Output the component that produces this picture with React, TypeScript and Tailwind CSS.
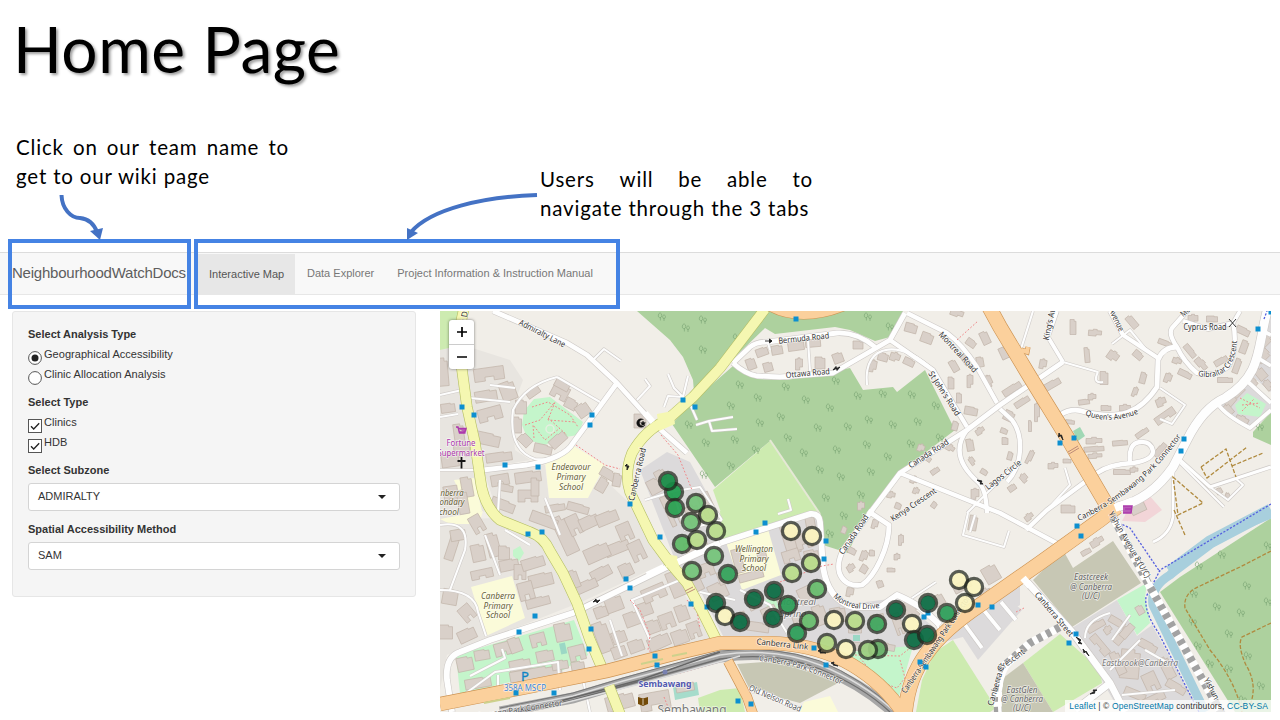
import React from "react";

type Building = [number, number, number, number, number];
type Label = { t: string; x: number; y: number; r?: number; s?: number; c?: string; i?: boolean; b?: boolean; w?: number };

const forests = [
  "637,311 670,340 683,357 693,380 694,392 720,368 763,311",
  "768,311 903,311 890,337 875,341 850,330 835,327 775,334 765,328 735,357",
  "672,424 693,401 733,366 757,379 787,380 850,368 863,390 893,387 897,392 925,370 955,430 900,472 867,512 848,553 823,545 820,515 770,441 715,487",
  "1271,518 1180,577 1160,592 1235,712 1271,712",
  "1253,432 1271,412 1271,445 1253,437",
];
const grass = [
  "440,311 459,311 455,330 453,347 440,350",
  "713,490 770,441 818,512 731,541",
  "1023,663 1060,634 1100,670 1102,683 1053,712",
  "916,712 922,680 935,652 953,640 996,708 990,712",
  "722,540 810,511 720,511",
  "698,698 720,690 720,712 700,712",
  "720,690 740,688 745,712 720,712",
];
const parks = [
  "524,411 534,399 550,397 583,422 578,435 560,438 545,445 528,440 522,425",
  "1117,600 1147,583 1145,597 1150,623 1137,635",
  "456,655 520,636 574,620 588,655 560,672 510,682 460,694",
  "843,658 860,650 913,646 899,696 880,684",
  "765,600 780,596 783,608 768,610",
  "1235,405 1247,393 1266,404 1260,417 1238,414",
  "513,550 520,546 524,553 519,561 513,556",
];
const schools = [
  "545,460 572,445 605,465 588,498 549,498",
  "471,587 512,576 525,618 486,636",
  "440,519 483,511 479,524 450,524",
  "726,542 768,529 781,575 742,590",
  "804,702 830,696 838,712 800,712",
  "454,480 474,478 482,511 470,516",
];
const brown = [
  "1033,580 1063,550 1073,568 1113,541 1141,583 1072,627",
  "1003,678 1023,663 1053,712 1000,712",
  "737,664 780,661 840,682 800,703 750,690",
];
const gray = [
  "640,470 667,452 690,462 722,520 728,543 765,530 806,514 818,520 822,580 850,604 897,598 940,632 970,606 1000,588 1020,583 1020,605 970,635 915,650 860,652 820,642 725,640 700,590 675,560",
  "1072,628 1117,600 1137,636 1152,625 1200,712 1120,712",
  "955,625 1000,592 1022,610 978,660",
  "1217,404 1245,380 1271,402 1271,410 1248,428",
  "1238,383 1258,356 1262,311 1271,311 1271,392 1252,376",
];
const estates = [
  "440,350 458,343 467,410 480,477 487,511 440,520",
  "484,472 545,465 549,498 605,480 640,513 665,563 575,605 548,547 530,532 500,520",
  "440,520 495,518 546,547 576,604 447,655 440,690",
  "583,612 668,570 715,640 610,666 602,665",
  "463,345 510,360 523,380 512,410 515,450 530,460 483,468 475,440",
];

const minorRoads = [
  "M557,377 Q525,385 513,410 Q508,450 535,459 Q560,462 573,443",
  "M557,377 L600,402", "M593,360 L604,349 L621,361", "M637,400 L650,386 L645,379",
  "M664,407 L668,396 L683,397 L674,388 L668,374 M683,397 L688,376 M690,404 L697,420 M696,425 L709,421 L733,417 M709,421 L712,431 L737,429",
  "M440,395 L462,390 M440,470 L482,470 M440,525 Q470,520 465,550 L450,590 M440,590 Q475,590 478,612 L486,636",
  "M645,500 L675,491 L700,487 L722,520 M675,498 L685,530 L722,520", "M770,350 L768,343 M808,340 L810,371",
  "M867,385 C862,340 905,340 935,372", "M1063,362 L1098,372 M1098,372 q-6,12 5,10",
  "M1033,311 L1020,352", "M1112,344 L1130,330 L1148,352 M1160,388 L1185,405 L1172,424 L1160,419",
  "M1210,487 L1228,500 L1243,485 L1235,478 M1180,463 L1224,507",
  "M462,696 L495,672 L558,662 L560,690 M470,676 L505,658 L502,649 M498,695 L498,675 M590,712 L583,680",
  "M778,514 L791,510 L788,499",
  "M1085,638 Q1085,620 1110,613 M1112,640 L1130,615 M1110,670 L1140,640 M1122,695 L1175,690 M1145,650 L1168,663",
  "M1047,510 L1070,485 L1065,468 M967,513 L1010,470", "M968,513 L963,535 L1004,547 L1009,531 M975,515 L970,532",
  "M740,590 L770,605 L790,638 M700,592 L735,600", "M930,612 L945,640 M912,598 L936,582",
  "M440,417 L458,414 M490,385 L515,388 M470,398 L510,402 M500,480 L498,512 M545,498 L560,535",
  "M505,530 L530,545 M485,535 L500,575 M650,640 L632,600 L680,580 M610,620 L622,656 M1152,490 L1163,482",
];
const roads: [string, number][] = [
  ["M493,311 L567,343 L587,355 L617,383 L653,423 L687,453", 5],
  ["M617,383 L590,420 L573,443 Q565,458 527,465 L483,470", 5],
  ["M452,712 L447,680 Q445,657 460,652 L490,640 L573,613 L667,567", 6],
  ["M733,363 L750,347 Q756,342 767,342 L837,333 Q857,332 875,347", 5],
  ["M733,363 Q745,374 757,376 L780,377 L833,373 L890,340 L905,313", 5],
  ["M890,340 L933,370 L967,427", 4.5],
  ["M907,313 L947,333 Q962,344 977,367 L997,403", 4.5],
  ["M1063,362 L1000,405 L967,430 L900,473 L867,517 L843,550 C831,575 846,588 862,585 C875,576 889,548 889,525 L868,511", 5],
  ["M900,473 L1000,513 L1060,545", 4.5],
  ["M967,430 C952,450 962,468 978,482 Q986,488 987,513", 4.5],
  ["M1000,409 L1012,420 C1024,436 1023,465 1007,482", 4.5],
  ["M1060,415 Q1072,407 1085,412 C1120,420 1140,413 1157,387 L1158,360 Q1163,347 1177,347", 5],
  ["M1158,358 L1123,335 L1110,311", 4.5],
  ["M1057,311 L1048,337 L1063,362", 4],
  ["M1187,311 L1172,328 Q1168,334 1177,347 Q1184,362 1197,373 Q1215,378 1229,366 Q1238,345 1233,323 L1208,329 L1183,321", 4.5],
  ["M1233,323 L1240,311", 4],
  ["M1026,530 L1047,510 L1097,473 Q1110,464 1133,463 Q1153,460 1153,451 Q1151,441 1140,442 Q1128,443 1130,463", 4.5],
  ["M1180,460 L1210,487 L1271,467", 3.5],
  ["M1173,470 L1173,517 Q1170,535 1153,542", 3],
  ["M1218,404 Q1225,415 1250,428 L1271,410 M1247,381 L1271,403 M1258,358 L1271,366 M1261,330 L1271,335", 4],
  ["M1117,507 Q1150,500 1173,467 L1187,440 Q1203,408 1225,398 C1262,375 1257,350 1267,311", 9],
  ["M720,543 L810,514 Q819,513 820,522 L823,567 Q828,600 853,607 L880,607 L897,595 Q905,598 920,607 L940,625", 6],
  ["M667,567 L720,543", 7],
  ["M740,689 Q760,690 775,698 L800,710", 4.5],
  ["M1027,582 L1073,633 L1110,683 L1125,712 M1110,683 L1075,710", 7],
  ["M963,622 L982,648 M982,608 L1000,630 M1001,602 L1016,620", 4],
];

const buildings: Building[] = [
  [489,374,30,13,-8],[508,391,15,19,-20],[486,396,22,11,-10],[490,414,24,13,-15],[487,439,26,12,12],[459,434,10,20,-8],[462,451,16,12,-6],[448,408,14,9,-8],[443,372,10,28,-5],
  [533,392,14,8,-35],[521,407,11,14,0],[517,425,9,16,0],[525,440,10,13,-45],[543,449,18,9,12],[558,440,18,10,-42],[560,392,17,14,28],[571,404,12,10,28],[583,410,13,13,-35],[562,385,15,8,28],
  [640,421,12,14,0],[499,457,26,9,-8],[500,480,18,11,-10],[528,477,26,11,-8],[450,460,17,14,-8],[451,495,14,18,-8],[467,487,11,20,-10],
  [506,488,14,7,10],[528,496,20,12,0],[535,487,8,18,0],[503,505,24,10,20],[555,508,20,7,-10],[578,508,22,8,15],[608,474,16,9,30],[602,485,10,14,30],[617,480,8,13,10],
  [463,502,10,24,-10],[477,524,12,18,-30],[493,545,12,24,-15],[478,553,13,17,-12],[482,574,22,9,-12],[504,553,11,14,0],[509,565,19,11,-12],[520,572,12,15,0],[533,563,23,11,-17],[541,580,24,13,-14],[526,591,15,18,-15],[538,602,24,9,-15],[452,548,9,25,18],[458,535,15,11,-10],
  [565,535,14,40,-25],[544,520,28,11,20],[574,525,13,20,-25],[589,522,19,12,-25],[607,518,22,12,-22],[625,532,14,18,-23],[617,548,25,11,-22],[597,553,25,15,-24],[637,551,14,20,-25],[601,573,21,11,-28],[586,586,23,10,-24],[574,579,9,18,-20],[626,570,13,13,-25],
  [450,597,15,15,10],[467,613,13,16,-40],[446,632,13,14,0],[467,635,18,12,-25],
  [601,612,13,11,-20],[614,604,17,15,-20],[603,637,14,31,-20],[619,637,14,12,-20],[632,619,15,14,-20],[645,609,14,13,-20],[654,593,24,14,-23],[676,584,14,26,-22],[652,627,15,13,-20],[667,621,15,15,-20],[682,613,12,16,-20],[636,646,15,12,-20],[619,652,14,12,-20],[659,642,22,13,-24],[680,637,16,14,-20],[694,630,12,16,-20],
  [465,664,16,14,-12],[482,655,15,10,-10],[503,649,17,13,-15],[520,665,21,11,-12],[515,645,12,15,-20],[538,640,15,13,-15],[545,656,17,11,-12],[563,632,16,18,-12],[577,653,16,15,-14],[536,675,52,14,-10],[478,683,26,10,-10],[578,667,13,11,-10],[560,665,16,9,-10],
  [655,486,14,15,-28],[672,510,13,32,-25],[660,475,10,10,-28],[694,515,13,20,-25],[707,505,12,25,-25],[696,546,23,12,-20],[695,584,14,16,-25],[706,570,16,13,-20],[718,591,18,16,-25],[790,538,14,32,-17],[804,541,17,15,-15],[811,527,9,25,-10],[812,558,14,16,-12],[791,556,17,12,-17],[738,561,9,24,-15],[751,576,25,8,-15],[762,556,9,8,-15],
  [725,577,14,13,-20],[753,601,12,17,-25],[770,614,15,15,-25],[786,604,15,15,-20],[808,594,19,16,-25],[738,620,17,13,-20],[758,627,22,9,8],[820,615,12,20,-20],[800,621,13,12,-20],[838,615,15,15,-10],[855,626,13,14,0],[878,622,13,15,-10],[883,646,24,7,10],[863,647,20,8,5],[898,624,8,22,-20],[910,611,19,11,40],[939,600,10,11,-30],[962,586,18,9,-28],[987,596,11,16,-25],[991,574,15,17,-30],
  [751,364,9,11,-20],[768,367,9,9,-15],[762,352,12,8,-20],[777,350,11,9,-10],[796,346,16,9,-8],[813,343,15,8,-5],[799,364,7,10,0],[820,363,10,12,0],[838,358,10,10,-20],[858,345,10,8,0],[873,366,7,10,10],[883,357,10,8,15],[895,357,10,7,20],[909,362,11,7,25],[911,328,12,9,15],[927,338,12,10,20],[957,313,13,6,20],[971,343,10,7,35],[985,338,8,13,-25],[954,366,7,12,-30],[966,359,8,12,-35],[980,362,7,10,-10],[989,381,6,10,-25],[951,383,6,12,0],[970,381,6,11,0],[959,398,5,10,0],[971,411,13,8,10],[955,426,6,9,15],[921,448,7,6,20],
  [1004,353,8,12,-25],[1012,389,20,7,-33],[1022,402,16,6,-33],[1009,416,10,10,25],[1030,426,3,11,0],[1043,364,7,8,10],[1051,385,20,7,-30],[1073,327,6,15,0],[1132,322,7,14,-40],[1095,333,13,5,5],[1087,355,5,15,-5],[1113,356,11,8,35],[1138,355,10,7,40],[1104,378,8,13,0],[1143,378,6,11,15],[1135,392,5,8,20],[1084,402,11,5,-8],[1092,397,8,5,0],[1106,408,10,5,0],[1125,408,11,5,0],[1142,433,14,5,-35],[1161,402,10,7,-20],[1165,416,22,8,-35],[1160,450,16,6,-50],[1122,472,17,5,0],[1134,470,8,4,0],[1120,443,15,5,-5],[1094,441,16,5,0],[1094,449,20,5,-5],[1095,456,14,4,-3],[1070,422,9,4,5],[1053,466,10,5,0],[1067,461,8,4,0],[1037,412,5,16,0],[1185,374,14,6,25],[1168,378,7,8,20],[1165,343,14,5,20],[1177,361,9,5,20],[1190,351,15,6,50],[1201,364,14,6,50],[1221,361,14,6,-30],[1237,366,6,15,20],[1225,380,15,5,0],[1244,347,7,13,20],[1243,331,14,7,25],[1193,319,10,7,0],[1212,319,11,6,0],
  [1265,341,9,13,45],[1263,356,9,14,45],[1261,374,9,12,-40],[1230,400,10,13,40],[1238,391,12,9,-45],[1228,410,8,11,-40],[1242,420,13,6,25],[1252,382,11,8,40],[1268,385,7,9,-40],
  [927,458,9,5,35],[914,480,7,6,20],[935,471,9,5,-35],[950,448,9,5,30],[970,445,7,12,-10],[980,431,9,5,-30],[1004,431,7,5,20],[972,461,5,7,-35],[984,472,7,5,30],[891,495,8,5,10],[898,506,6,6,20],[916,491,6,5,20],[934,505,5,6,35],[975,494,8,9,0],[1012,488,8,6,-35],[1024,478,7,7,-40],[1010,456,5,8,15],[1030,457,5,12,25],[1005,441,6,7,0],[861,506,7,7,0],[852,551,8,6,25],[864,556,7,9,20],[872,553,5,6,0],[851,568,8,6,-30],[864,569,7,8,30],[850,592,7,8,10],[880,584,6,7,-20],[901,540,5,9,0],[891,570,8,4,0],[897,557,6,5,0],[844,530,5,7,20],[875,524,6,8,15],[973,523,8,15,10],[1068,509,14,8,0],[1138,508,15,10,-25],[1029,517,9,5,-35],[1086,552,10,5,-30],[1097,542,14,6,-30],[1219,491,6,6,-30],[1228,496,4,5,-30],
  [1096,626,19,7,-30],[1108,630,8,6,-35],[1117,622,17,7,30],[1120,638,14,8,-50],[1100,645,24,8,50],[1127,631,16,8,-50],[1130,664,19,29,5],[1148,646,19,8,28],[1118,663,9,24,-25],[1167,668,10,23,-27],[1151,682,14,19,-25],[1135,694,22,8,22],[1176,687,21,8,30],[1154,699,23,8,-25],[1140,610,7,9,-30],
  [620,702,28,15,-15],[655,701,30,18,-10],[685,687,18,9,-10],
];

const stops: [number, number][] = [
  [462,407],[474,415],[505,465],[538,467],[592,415],[590,425],[683,400],[695,407],[630,504],[796,319],[1271,312],[1258,329],[1184,439],[1181,451],[1074,438],[1060,443],[528,534],[542,532],[660,537],[626,579],[630,588],[535,616],[519,632],[591,629],[589,649],[691,604],[707,607],[655,656],[657,665],[516,693],[554,693],[756,532],[765,523],[826,541],[824,559],[814,648],[826,665],[738,701],[751,704],[924,617],[928,613],[920,662],[926,667],[978,605],[992,607],[1077,526],[1081,536],[1076,634],[1069,643],
];

const trees: [number, number][] = [
  [662,317],[686,328],[703,320],[703,350],[737,338],[868,317],[890,327],[740,385],[786,387],[731,406],[758,398],[806,400],[836,381],[858,396],[883,394],[912,395],[936,406],[760,423],[781,417],[818,428],[848,427],[869,420],[893,425],[918,422],[830,408],[735,440],[756,450],[788,438],[804,453],[837,450],[867,445],[911,444],[888,457],[731,466],[820,470],[841,477],[871,472],[826,498],[861,495],[940,438],[844,516],[830,534],[689,425],[706,443],[704,475],[1199,566],[1222,555],[1268,546],[1194,594],[1217,607],[1247,586],[1193,622],[1241,613],[1268,602],[1229,634],[1198,646],[1248,656],[1229,669],[1261,686],[1210,664],[1243,700],[1260,427],
];

const points: [number, number, string][] = [
  [674,492,"#1d9c4d"],[668,481,"#168b45"],[675,508,"#279f50"],[696,503,"#73c378"],[691,522,"#73c378"],[708,515,"#b9dd8b"],[716,531,"#b9dd8b"],[682,544,"#5eb966"],[697,540,"#b9dd8b"],[714,556,"#73c378"],[692,571,"#73c378"],[728,574,"#31a35a"],[716,603,"#096b42"],[725,616,"#fbf4bf"],[740,622,"#096b42"],[754,599,"#096b42"],[774,591,"#096b42"],[773,618,"#096b42"],[788,605,"#2b9d57"],[797,633,"#2b9d57"],[809,621,"#66bb6c"],[817,589,"#66bb6c"],[792,573,"#b9dd8b"],[811,563,"#b9dd8b"],[791,531,"#fbf4bf"],[812,536,"#fbf4bf"],[834,620,"#fbf4bf"],[855,621,"#b9dd8b"],[877,624,"#3da65d"],[827,643,"#b2d782"],[846,649,"#fbf4bf"],[878,649,"#66ad67"],[868,650,"#9ccd80"],[896,610,"#096b42"],[912,624,"#fbf4bf"],[928,603,"#096b42"],[947,613,"#2b9d57"],[914,640,"#096b42"],[927,635,"#096b42"],[959,580,"#fbf4bf"],[974,587,"#fbf4bf"],[965,603,"#fbf4bf"],
];

const trunkRoads: [string, number][] = [
  ["M440,704 L527,687 L607,671 L673,654 L720,643 L770,643 Q810,644 843,660 Q882,680 905,716", 13],
  ["M905,714 Q908,678 927,653 Q943,630 980,605 L1040,563 L1100,520 L1117,507", 14],
  ["M988,305 L1000,327 L1030,377 L1067,437 L1112,514", 14],
  ["M728,661 L747,697 L753,714", 9],
  ["M765,304 Q800,326 850,304", 8],
  ["M1021,350 L1027,352 L1028,347", 4],
];

const labels: Label[] = [
  { t: "Admiralty Lane", x: 541, y: 336, r: 27, w: 51 },
  { t: "Bermuda Road", x: 804, y: 341, r: -6, w: 51 },
  { t: "Ottawa Road", x: 808, y: 376, r: -5, w: 44 },
  { t: "Montreal Road", x: 956, y: 354, r: 47, w: 52 },
  { t: "St John's Road", x: 942, y: 395, r: 57, w: 51 },
  { t: "Canada Road", x: 930, y: 456, r: -33, w: 46 },
  { t: "Kenya Crescent", x: 915, y: 507, r: -34, w: 53 },
  { t: "Lagos Circle", x: 1005, y: 477, r: -38, w: 43 },
  { t: "Canada Road", x: 856, y: 536, r: -56, w: 46 },
  { t: "Cyprus Road", x: 1205, y: 330, r: 0, w: 43 },
  { t: "King's Av", x: 1052, y: 325, r: -78, w: 32 },
  { t: "Avenue", x: 1114, y: 321, r: 65, w: 24 },
  { t: "Mo", x: 1187, y: 314, r: -40, w: 10 },
  { t: "Canberra Road", x: 640, y: 475, r: -77, w: 54 },
  { t: "Canberra Link", x: 782, y: 647, r: 6, w: 52 },
  { t: "Old Nelson Road", x: 774, y: 701, r: 23, w: 56, c: "#555" },
  { t: "Canberra Street", x: 1052, y: 616, r: 50, w: 55 },
  { t: "Yishun Avenue 8 (U/C)", x: 1127, y: 546, r: 60, w: 75 },
  { t: "Yishun", x: 1209, y: 690, r: 62, w: 23 },
  { t: "Crescent", x: 1013, y: 662, r: -36, w: 30 },
  { t: "Canberra-Sembawang Park Connector", x: 938, y: 646, r: -56, w: 115 },
  { t: "Canberra Cr", x: 999, y: 685, r: -74, w: 44 },
  { t: "bawang Park Connector", x: 521, y: 712, r: -9, w: 84, c: "#555" },
  { t: "g D", x: 467, y: 318, r: -82, w: 13 },
  { t: "Endeavour", x: 571, y: 470, i: true, c: "#666035", w: 39 },
  { t: "Primary", x: 571, y: 480, i: true, c: "#666035", w: 29 },
  { t: "School", x: 571, y: 489.5, i: true, c: "#666035", w: 24 },
  { t: "nberra", x: 452, y: 495.5, i: true, c: "#666035", w: 23 },
  { t: "ondary", x: 452, y: 505, i: true, c: "#666035", w: 25 },
  { t: "chool", x: 449, y: 514.5, i: true, c: "#666035", w: 20 },
  { t: "Canberra", x: 498, y: 599, i: true, c: "#666035", w: 34 },
  { t: "Primary", x: 498, y: 609, i: true, c: "#666035", w: 29 },
  { t: "School", x: 498, y: 618, i: true, c: "#666035", w: 24 },
  { t: "Wellington", x: 754, y: 552, i: true, c: "#666035", w: 38 },
  { t: "Primary", x: 754, y: 562, i: true, c: "#666035", w: 29 },
  { t: "School", x: 754, y: 571, i: true, c: "#666035", w: 24 },
  { t: "Montreal", x: 797, y: 605, i: true, c: "#777", w: 38 },
  { t: "Spring", x: 793, y: 617, i: true, c: "#777", w: 27 },
  { t: "Eastcreek", x: 1091, y: 580, i: true, c: "#666", w: 34 },
  { t: "@ Canberra", x: 1091, y: 589.5, i: true, c: "#666", w: 42 },
  { t: "(U/C)", x: 1091, y: 599, i: true, c: "#666", w: 18 },
  { t: "Eastbrook@Canberra", x: 1140, y: 666, i: true, c: "#777", w: 76 },
  { t: "EastGlen", x: 1022, y: 693, i: true, c: "#666", w: 31 },
  { t: "@ Canberra", x: 1022, y: 702, i: true, c: "#666", w: 42 },
  { t: "(U/C)", x: 1022, y: 711, i: true, c: "#666", w: 18 },
  { t: "Fortune", x: 461, y: 446, c: "#ac39ac", w: 29 },
  { t: "Supermarket", x: 461, y: 455.5, c: "#ac39ac", w: 47 },
  { t: "358A MSCP", x: 525, y: 690.5, c: "#3a86d8", w: 42 },
  { t: "Sembawang", x: 665, y: 687, c: "#5258b0", b: true, w: 53 },
  { t: "Sembawang", x: 692, y: 714, c: "#777", s: 12, w: 69 },
];

function StreetMap() {
  return (
    <svg viewBox="440 311 831 401" className="block h-full w-full" fontFamily="'Noto Sans', sans-serif">
      <defs>
        <g id="tree" fill="none" stroke="#7aa574" strokeWidth="0.8" opacity=".8">
          <path d="M-1.6,3.5 V0 M-1.6,0.7 C-5,1 -3.8,-4.5 -1.6,-4 C0.2,-3.5 .2,.3 -1.6,.7 M2,4 V0.5 M2,1.8 C0,1.5 .4,-2 2,-2 C4,-2 4,1.5 2,1.8" />
        </g>
        <path id="montreal-drive" d="M833,597 Q850,614 885,607" />
        <path id="gibraltar" d="M1198,376 Q1217,380 1229,368 Q1238,354 1237,330" />
        <path id="queens" d="M1085,415 Q1112,426 1142,412" />
        <path id="park-connector" d="M759,661 Q800,664 848,688" />
        <path id="park-connector-north" d="M1079,521 Q1146,490 1184,432" />
      </defs>
      <rect x="440" y="311" width="831" height="401" fill="#f1eee8" />
      {estates.map((p) => <polygon key={p} points={p} fill="#e8e5e0" />)}
      {gray.map((p) => <polygon key={p} points={p} fill="#dcdadb" />)}
      {grass.map((p) => <polygon key={p} points={p} fill="#cdebb0" />)}
      {forests.map((p) => <polygon key={p} points={p} fill="#add19e" />)}
      {parks.map((p) => <polygon key={p} points={p} fill="#c4f5cb" />)}
      {schools.map((p) => <polygon key={p} points={p} fill="#fbfbd9" />)}
      {brown.map((p) => <polygon key={p} points={p} fill="#c7c7b4" />)}
      <path d="M1130,506 L1148,494 L1162,510 L1145,522 L1122,521 Z" fill="#f2d5d8" />
      <path d="M1073,431 l7,-4 l5,9 l-7,5z" fill="#a0d8b5" />
      <rect x="560" y="643" width="6" height="11" fill="#9bd8c5" transform="rotate(-12 563 648)" />
      <rect x="853" y="635" width="7" height="6" fill="#9bd8c5" />
      <circle cx="550" cy="429" r="4" fill="#c4f5cb" stroke="#e5efe0" strokeWidth="1.5" />
      <path d="M673,687 l24,-5 l2,13 l-24,5z" fill="#a6dccb" />
      <path d="M770,440 L820,514" stroke="#e5e8d5" strokeWidth="2" />
      <path d="M1271,514 Q1205,540 1170,575 Q1150,587 1153,605 L1205,712" fill="none" stroke="#a8cfdd" strokeWidth="9" />
      <path d="M1271,510 L1210,542 L1170,572" stroke="#a8cfdd" strokeWidth="13" fill="none" />

      <g fill="#d9d0c9" stroke="#c2b5aa" strokeWidth="0.7">
        {buildings.map(([x, y, w, h, r], i) =>
          w * h > 170 && i % 3 === 0 ? (
            <path key={i} transform={`translate(${x} ${y}) rotate(${r})`} d={`M${-w / 2},${-h / 2} h${w} v${h} h${-w * 0.35} v${-h * 0.3} h${-w * 0.3} v${h * 0.3} h${-w * 0.35} z`} />
          ) : w * h < 90 && i % 2 === 0 ? (
            <path key={i} transform={`translate(${x} ${y}) rotate(${r})`} d={`M${-w / 2},${-h / 2} h${w * 0.35} v-1.2 h${w * 0.3} v1.2 h${w * 0.35} v${h * 0.8} h${-w * 0.4} v${h * 0.3} h${-w * 0.6} z`} />
          ) : (
            <path key={i} transform={`translate(${x} ${y}) rotate(${r})`} d={`M${-w / 2},${-h / 2} h${w * 0.7} v${h * 0.12} h${w * 0.3} v${h * 0.88} h${-w} z`} />
          )
        )}
      </g>
      {trees.map(([x, y]) => <use key={`${x}-${y}`} href="#tree" x={x} y={y} />)}

      <g fill="none" strokeLinejoin="round">
        {minorRoads.map((d) => <path key={d} d={d} stroke="#cfcbc8" strokeWidth="3.2" />)}
        {roads.map(([d, w]) => <path key={d} d={d} stroke="#cdc9c6" strokeWidth={w + 1} />)}
        {minorRoads.map((d) => <path key={d} d={d} stroke="#fdfdfd" strokeWidth="2.1" />)}
        {roads.map(([d, w]) => <path key={d} d={d} stroke="#fefefe" strokeWidth={w - 0.2} />)}
      </g>

      <g fill="none" stroke="#f0888a" strokeWidth="1" strokeDasharray="1.8 1.8">
        <path d="M576,445 L605,465 L620,469 M661,435 L678,455 L692,490" />
        <path d="M525,425 L540,420 L555,402 L548,420 L575,422 M532,407 L548,402 L570,415 L578,427 M534,438 L533,425 L545,440 L560,428 M548,418 L567,435" />
        <path d="M630,600 L640,610 L650,635 L648,650 L655,655 M687,600 L697,612 L700,628" />
        <path d="M780,582 L822,566 L834,564 M855,655 L900,656 L910,648 M860,658 L880,682 L897,688 M900,660 L905,678 L897,688 M680,673 L720,662 M664,697 L670,712 M957,340 L978,321" />
        <path d="M1240,398 l20,10 m-18,3 l12,-12 m-12,6 l18,-2 M1016,612 l8,-4" />
      </g>
      <g fill="none" stroke="#b08a3e" strokeWidth="1.3" strokeDasharray="4 1.8">
        <path d="M1173,477 L1203,503 L1178,515 Z M1201,467 L1226,449 L1236,477 M1201,467 L1207,478 L1247,447 M1232,466 L1263,453 M1174,510 L1185,535" />
        <path d="M1271,551 L1240,567 L1200,586 Q1183,593 1185,608 Q1195,625 1210,650 Q1235,680 1242,712 M1271,623 L1242,637 Q1237,645 1246,665 Q1258,685 1250,705" />
      </g>
      <g fill="none" stroke="#5560df" strokeWidth="1.3" strokeDasharray="2.2 1.6">
        <path d="M1271,504 L1160,570 L1156,578 L1146,597 Q1144,612 1158,632 L1199,712 M1119,523 L1130,528 L1160,572 M1264,319 L1267,311" />
      </g>

      <path d="M500,712 L573,698 L623,683 L720,657 Q775,649 820,667 Q862,684 893,712" stroke="#a6a6a6" strokeWidth="11" fill="none" />
      <path d="M500,710 L573,696 L623,681 L720,655 Q775,647 820,665 Q862,682 893,710" stroke="#dedede" strokeWidth="1.5" fill="none" />
      <path d="M510,714 L573,700 L623,686 L720,659 Q775,651 820,669 Q862,686 890,712" stroke="#6e6e6e" strokeWidth="1.3" fill="none" />
      <path d="M560,704 L640,684 L740,656" stroke="#ddd" strokeWidth="1.3" fill="none" />
      <path d="M560,701 L640,680 L720,652" stroke="#666" strokeWidth="1.6" fill="none" />
      <path d="M500,708 L573,693 L623,678 L720,651 Q775,645 820,661 Q862,678 897,712" stroke="#777" strokeWidth="1" fill="none" />

      {[
        "M464,309 Q457,335 460,355 L467,407 L475,443 L480,477 Q483,506 500,520 L530,532 Q544,537 550,551 L563,573 L577,603 L590,640 L602,668 M609,686 L620,714",
        "M765,309 L720,368 L693,397 L667,420 Q645,430 632,453 Q624,473 630,492 L640,513 L653,540 L670,563 L687,583 L703,613 L717,641",
      ].map((d) => (
        <g key={d} fill="none">
          <path d={d} stroke="#b5bf65" strokeWidth="11" />
          <path d={d} stroke="#f5f7b1" strokeWidth="9.8" />
        </g>
      ))}
      <path d="M657,414 L673,411 L675,424 L659,431 Z M665,554 L677,556 L680,570 L666,567 Z" fill="#f5f7b1" />
      <path d="M645,413 L653,422 M647,575 L664,567 M678,562 L700,551" stroke="#fff" strokeWidth="6" />

      {trunkRoads.map(([d, w]) => <path key={`${d}c`} d={d} stroke="#cd9352" strokeWidth={w + 1.2} fill="none" />)}
      {trunkRoads.map(([d, w]) => <path key={`${d}f`} d={d} stroke="#fbd09c" strokeWidth={w} fill="none" />)}
      <path d="M1115,508 L1133,501" stroke="#fff" strokeWidth="8" />
      <path d="M1023,578 L1030,586" stroke="#fff" strokeWidth="7" />
      <path d="M484,703 L510,698 M641,664 L663,659 M672,656 L687,653" stroke="#cdd18c" strokeWidth="2" />

      <g fill="none">
        <path d="M1113,517 L1150,587 L1222,714 M998,712 Q996,680 1005,665 L1030,643 L1060,627" stroke="#fff" strokeWidth="8" />
        <path d="M1113,517 L1150,587 L1222,714 M998,712 Q996,680 1005,665 L1030,643 L1060,627" stroke="#a2a2a2" strokeWidth="8" strokeDasharray="5 5" />
        <path d="M1115,517 L1150,584 M1000,712 Q998,682 1007,667 L1022,652" stroke="#fff" strokeWidth="3.5" />
        <path d="M685,591 l8,-4 M687,593 l8,-4 M1068,452 l10,-6 M1069,454 l10,-6" stroke="#bd8b78" strokeWidth="1" />
      </g>

      <g stroke="#222" strokeWidth=".9" fill="#222">
        <path d="M600,600 l-7,2 l3,-3 l1,4z" /><path d="M765,341 h7 l-2.500,-2 v4 l2.500,-2" /><path d="M840,367 l-7,3 l3,-3.500 l1,4z" />
        <path d="M1063,440 l-4,-7 l-.5,4 l3,-2z" /><path d="M826,653 l-8,-2 l3,-2 l-1,4z" /><path d="M838,666 l-7,-3 l3,-1 l-1,3z" />
        <path d="M977,480 l6,4 l-3,0 l2,-3z" /><path d="M627,470 v-6 l-2,2 h4z" /><path d="M1076,637 l6,7 l-4,-1 l3,-3z" /><path d="M1089,656 l-6,-7 l1,4 l2,-2z" /><path d="M1090,694 l7,-4 l-4,0 l2,3z" />
        <path d="M1229,319 l7,8 M1236,319 l-7,8" fill="none" />
      </g>

      <g textAnchor="middle" stroke="#fff" strokeOpacity=".6" strokeWidth="1.6" paintOrder="stroke" strokeLinejoin="round">
        {labels.map((l) => (
          <text key={`${l.t}${l.x}${l.y}`} transform={`translate(${l.x} ${l.y}) rotate(${l.r ?? 0})`} fontSize={l.s ?? 8.4} fill={l.c ?? "#333"} fontStyle={l.i ? "italic" : "normal"} fontWeight={l.b ? 700 : 400} textLength={l.w} lengthAdjust="spacingAndGlyphs">{l.t}</text>
        ))}
      </g>
      <g fontSize="7.9" fill="#333" stroke="#fff" strokeOpacity=".6" strokeWidth="1.6" paintOrder="stroke">
        <text><textPath href="#montreal-drive" textLength="50" lengthAdjust="spacingAndGlyphs">Montreal Drive</textPath></text>
        <text><textPath href="#gibraltar" textLength="62" lengthAdjust="spacingAndGlyphs">Gibraltar Crescent</textPath></text>
        <text><textPath href="#queens" textLength="55" lengthAdjust="spacingAndGlyphs">Queen's Avenue</textPath></text>
        <text fill="#555"><textPath href="#park-connector" textLength="86" lengthAdjust="spacingAndGlyphs">Canberra Park Connector</textPath></text>
        <text><textPath href="#park-connector-north" textLength="134" lengthAdjust="spacingAndGlyphs">Canberra-Sembawang Park Connector</textPath></text>
      </g>

      <g fill="#0c8fd0">
        {stops.map(([x, y]) => <rect key={`${x},${y}`} x={x - 2.5} y={y - 2.5} width="5" height="5" />)}
      </g>
      <path d="M456,427 h2 l1.5,6 h6 M458,428.5 h8 l-1,3.5 h-6" stroke="#ac39ac" strokeWidth="1.4" fill="#b85cb8" />
      <path d="M1123,506 h9 l-1,7 h-8 M1125,509 h6" stroke="#ac39ac" strokeWidth="1.5" fill="#b85cb8" />
      <path d="M461.500,457 v11.500 M457.500,461 h8" stroke="#151515" strokeWidth="1.8" />
      <path d="M643.500,419.500 a4.300,4.300 0 1 0 1,6 a3.300,3.300 0 1 1 -1,-6z M643,421 l.8,1.500 1.700,.2 -1.200,1.200 .3,1.700 -1.600,-.9 -1.500,.9 .4,-1.700 -1.300,-1.200 1.700,-.2z" fill="#111" stroke="#111" strokeWidth=".4" />
      <text x="525" y="681" textAnchor="middle" fontSize="13" fill="#0c83c5" stroke="#0c83c5" strokeWidth=".3">P</text>
      <path d="M638,697 l5,1.500 5,-1.500 v7 l-5,2 -5,-2z" fill="#734a08" /><path d="M643,699 v6" stroke="#fff" strokeWidth=".7" />
      <circle cx="665" cy="672" r="2.500" fill="#7981b0" />

      {points.map(([x, y, c]) => (
        <g key={`${x}:${y}`}>
          <circle cx={x} cy={y} r="7.400" fill={c} fillOpacity=".93" />
          <circle cx={x} cy={y} r="8.600" fill="none" stroke="#20251b" strokeOpacity=".73" strokeWidth="3.200" />
        </g>
      ))}
    </svg>
  );
}

function Choice({ label, type, checked }: { label: string; type: "radio" | "check"; checked: boolean }) {
  return (
    <div className="flex h-5 items-start">
      <svg viewBox="0 0 14 14" className="mt-[4px] block h-[14px] w-[14px] shrink-0">
        {type === "radio" ? <circle cx="7" cy="7" r="6.400" fill="#fff" stroke="#555" /> : <rect x=".5" y=".5" width="13" height="13" fill="#fff" stroke="#555" />}
        {checked && (type === "radio" ? <circle cx="7" cy="7" r="3.500" fill="#222" /> : <path d="M3,7.200 L5.700,10 L11.200,4.300" fill="none" stroke="#222" strokeWidth="1.300" />)}
      </svg>
      <span className="ml-[2px] text-[11px] leading-[14px] tracking-[0.04px]">{label}</span>
    </div>
  );
}

function Select({ value }: { value: string }) {
  return (
    <div className="flex h-[28px] w-[372px] items-center justify-between rounded-[3px] border border-[#d4d4d4] bg-white pr-[13px] pl-[9px] text-[11px]">
      <span className="-mt-px">{value}</span>
      <svg viewBox="0 0 8 4" className="h-1 w-2"><path d="M0,0 H8 L4,4 Z" fill="#222" /></svg>
    </div>
  );
}

export default function App() {
  return (
    <div className="relative flex h-[720px] w-[1280px] flex-col overflow-hidden bg-white font-['Liberation_Sans',sans-serif] text-[#333]">
      <h1 className="h-[133px] pt-[7px] pl-[13px] font-['Lato',sans-serif] text-[64px] leading-[84px] tracking-[0.5px] whitespace-nowrap text-black [text-shadow:2px_2px_3px_rgba(0,0,0,0.4)]">Home Page</h1>
      <div className="flex h-[119px] font-['Lato',sans-serif] text-[20.5px] leading-[29px] tracking-[0.82px] text-black">
        <div className="ml-4 w-[273px]">
          <div className="flex justify-between"><span>Click</span><span>on</span><span>our</span><span>team</span><span>name</span><span>to</span></div>
          <div>get to our wiki page</div>
        </div>
        <div className="ml-[251px] w-[273px] pt-[32px]">
          <div className="flex justify-between"><span>Users</span><span>will</span><span>be</span><span>able</span><span>to</span></div>
          <div className="whitespace-nowrap">navigate through the 3 tabs</div>
        </div>
      </div>
      <nav className="flex h-[43px] items-stretch border-y border-t-[#dcdcdc] border-b-[#e7e7e7] bg-[#f8f8f8] text-[11px] text-[#777]">
        <div className="flex w-[197px] items-center pl-3 text-[15px] tracking-[-0.22px] text-[#5e5e5e]">NeighbourhoodWatchDocs</div>
        <div className="mt-px flex w-[98px] items-center bg-[#e7e7e7] pl-3 text-[#555]">Interactive Map</div>
        <div className="flex items-center pl-3">Data Explorer</div>
        <div className="flex items-center pl-[23px]">Project Information &amp; Instruction Manual</div>
      </nav>
      <main className="flex pt-4">
        <section className="ml-3 h-[286px] w-[404px] rounded-[3px] border border-[#e6e6e6] bg-[#f5f5f5] px-[15px] pt-[15px]">
          <h2 className="h-5 text-[11px] leading-[14px] font-bold">Select Analysis Type</h2>
          <Choice label="Geographical Accessibility" type="radio" checked />
          <Choice label="Clinic Allocation Analysis" type="radio" checked={false} />
          <h2 className="mt-2 h-5 text-[11px] leading-[14px] font-bold">Select Type</h2>
          <Choice label="Clinics" type="check" checked />
          <Choice label="HDB" type="check" checked />
          <h2 className="mt-2 h-[20px] text-[11px] leading-[14px] font-bold">Select Subzone</h2>
          <Select value="ADMIRALTY" />
          <h2 className="mt-[11px] h-[20px] text-[11px] leading-[14px] font-bold">Spatial Accessibility Method</h2>
          <Select value="SAM" />
        </section>
        <section className="relative ml-6 h-[401px] w-[831px] overflow-hidden">
          <StreetMap />
          <div className="absolute top-[9px] left-[9px] flex w-[25px] flex-col overflow-hidden rounded-[3px] bg-white shadow-[0_0_3px_rgba(0,0,0,0.5)]">
            <button className="flex h-[25px] items-center justify-center border-b border-[#ccc] text-black"><svg viewBox="0 0 10 10" className="h-[10px] w-[10px]"><path d="M0,5 H10 M5,0 V10" stroke="currentColor" strokeWidth="1.700" /></svg></button>
            <button className="flex h-[24px] items-center justify-center text-black"><svg viewBox="0 0 10 10" className="h-[10px] w-[10px]"><path d="M0,5 H10" stroke="currentColor" strokeWidth="1.700" /></svg></button>
          </div>
          <div className="absolute right-0 bottom-0 h-[12px] bg-white/75 pr-[3px] pl-[4px] text-[8.5px] leading-[12px] tracking-[0.13px] whitespace-nowrap">
            <span className="text-[#0078a8]">Leaflet</span> | © <span className="text-[#0078a8]">OpenStreetMap</span> contributors, <span className="text-[#0078a8]">CC-BY-SA</span>
          </div>
        </section>
      </main>
      <div className="absolute top-[239px] left-[8px] h-[70px] w-[183px] border-4 border-[#4583e4]" />
      <div className="absolute top-[239px] left-[194px] h-[70px] w-[426px] border-4 border-[#4583e4]" />
      <svg className="absolute top-0 left-0 h-[250px] w-[640px]" viewBox="0 0 640 250" fill="none">
        <path d="M61.500,195 C62,209 71,218 80,218 C89,219 94,224 97,232" stroke="#4472c4" strokeWidth="4" />
        <path d="M90,231 L103,228 L100,240 Z" fill="#4472c4" />
        <path d="M537,195 C482,197 431,209 411,232" stroke="#4472c4" strokeWidth="4" />
        <path d="M407,228 L418,233 L407,240 Z" fill="#4472c4" />
      </svg>
    </div>
  );
}
